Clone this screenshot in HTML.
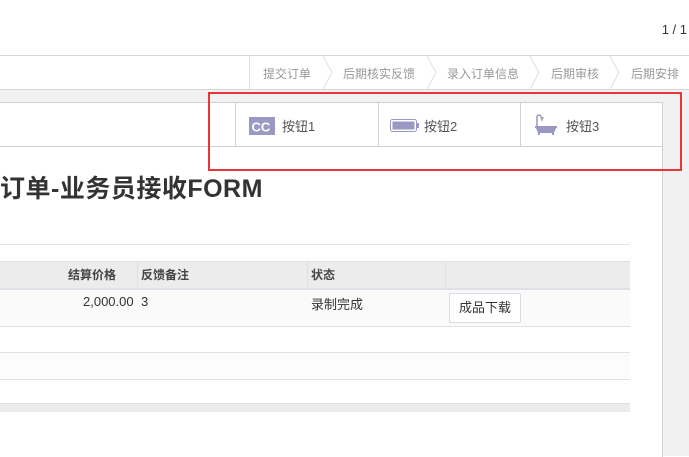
<!DOCTYPE html>
<html><head><meta charset="utf-8"><style>
body{margin:0;width:689px;height:456px;overflow:hidden;position:relative;background:#fff;font-family:"Liberation Sans","Noto Sans CJK SC",sans-serif;font-size:13px;color:#333}
.a{position:absolute}
.st{color:#999;font-size:12px;top:65px}
.chev{position:absolute;top:56px;width:12px;height:33px}
.bt{font-size:13px;color:#555;top:116px}
.th{font-weight:bold;font-size:12px;color:#444;top:266px}
</style></head><body>
<div class="a" style="right:2px;top:22px;font-size:13px;color:#333">1 / 1</div>
<div class="a" style="left:0;top:55px;width:689px;height:1px;background:#d3d6dc"></div>
<div class="a" style="left:249px;top:56px;width:1px;height:33px;background:#dde"></div>
<span class="a st" style="left:263px">提交订单</span>
<span class="a st" style="left:343px">后期核实反馈</span>
<span class="a st" style="left:447px">录入订单信息</span>
<span class="a st" style="left:551px">后期审核</span>
<span class="a st" style="left:631px">后期安排</span>
<svg class="chev" style="left:322px"><path d="M1 0L10 16.5L1 33" fill="none" stroke="#dcdfe4"/></svg>
<svg class="chev" style="left:426px"><path d="M1 0L10 16.5L1 33" fill="none" stroke="#dcdfe4"/></svg>
<svg class="chev" style="left:529px"><path d="M1 0L10 16.5L1 33" fill="none" stroke="#dcdfe4"/></svg>
<svg class="chev" style="left:609px"><path d="M1 0L10 16.5L1 33" fill="none" stroke="#dcdfe4"/></svg>
<div class="a" style="left:0;top:89px;width:689px;height:1px;background:#d3d6dc"></div>
<div class="a" style="left:0;top:90px;width:689px;height:366px;background:#f1f1f1"></div>
<div class="a" style="left:0;top:102px;width:662px;height:354px;background:#fff;border-top:1px solid #cdd0d6;border-right:1px solid #cdd0d6"></div>
<div class="a" style="left:0;top:146px;width:662px;height:1px;background:#cdd0d6"></div>
<div class="a" style="left:235px;top:103px;width:1px;height:43px;background:#cdd0d6"></div>
<div class="a" style="left:378px;top:103px;width:1px;height:43px;background:#cdd0d6"></div>
<div class="a" style="left:520px;top:103px;width:1px;height:43px;background:#cdd0d6"></div>
<svg class="a" style="left:249px;top:117px" width="26" height="18"><rect x="0" y="0" width="26" height="18" fill="#9a99c4"/><text x="2.5" y="14.5" font-family="Liberation Sans" font-weight="bold" font-size="13" fill="#fff">CC</text></svg>
<span class="a bt" style="left:282px">按钮1</span>
<svg class="a" style="left:390px;top:118px" width="30" height="16"><rect x="0.5" y="1.5" width="26" height="12" rx="2" fill="none" stroke="#9a99c4"/><rect x="2.5" y="3.5" width="22" height="8" fill="#9a99c4"/><rect x="27" y="5" width="2" height="5" fill="#9a99c4"/></svg>
<span class="a bt" style="left:424px">按钮2</span>
<svg class="a" style="left:535px;top:114px" width="24" height="22"><path d="M2 12V3a2 2 0 0 1 4 0" fill="none" stroke="#9a99c4" stroke-width="1.5"/><path d="M5 3l4 0 -2 5z" fill="#aaa"/><rect x="0" y="12" width="22" height="2" fill="#9a99c4"/><path d="M1 14h20l-2 5h-16z" fill="#9a99c4"/><rect x="3" y="19" width="2" height="2" fill="#9a99c4"/><rect x="17" y="19" width="2" height="2" fill="#9a99c4"/></svg>
<span class="a bt" style="left:566px">按钮3</span>
<div class="a" style="left:0;top:169px;font-size:25px;font-weight:bold;color:#333;letter-spacing:0.5px">订单-业务员接收FORM</div>
<div class="a" style="left:0;top:244px;width:630px;height:1px;background:#e2e4e8"></div>
<div class="a" style="left:0;top:261px;width:630px;height:27px;background:#ececec;border-top:1px solid #dde0e4"></div>
<div class="a" style="left:0;top:288px;width:630px;height:2px;background:#dde0e4"></div>
<div class="a" style="left:137px;top:262px;width:1px;height:26px;background:#dde0e4"></div>
<div class="a" style="left:307px;top:262px;width:1px;height:26px;background:#dde0e4"></div>
<div class="a" style="left:445px;top:262px;width:1px;height:26px;background:#dde0e4"></div>
<span class="a th" style="left:68px">结算价格</span>
<span class="a th" style="left:141px">反馈备注</span>
<span class="a th" style="left:311px">状态</span>
<div class="a" style="left:0;top:290px;width:630px;height:36px;background:#fafafa;border-bottom:1px solid #dde0e4"></div>
<span class="a" style="left:83px;top:294px;font-size:13px">2,000.00</span>
<span class="a" style="left:141px;top:294px;font-size:13px">3</span>
<span class="a" style="left:311px;top:294px;font-size:13px">录制完成</span>
<div class="a" style="left:449px;top:293px;width:70px;height:28px;border:1px solid #d8dbe0;border-radius:2px;background:#fff;font-size:13px;line-height:28px;text-align:center">成品下载</div>
<div class="a" style="left:0;top:352px;width:630px;height:26px;background:#fcfcfc;border-top:1px solid #dde0e4;border-bottom:1px solid #dde0e4"></div>
<div class="a" style="left:0;top:403px;width:630px;height:8px;background:#ececec;border-top:1px solid #dde0e4"></div>
<div class="a" style="left:208px;top:92px;width:470px;height:75px;border:2px solid #e8353a"></div>
</body></html>
